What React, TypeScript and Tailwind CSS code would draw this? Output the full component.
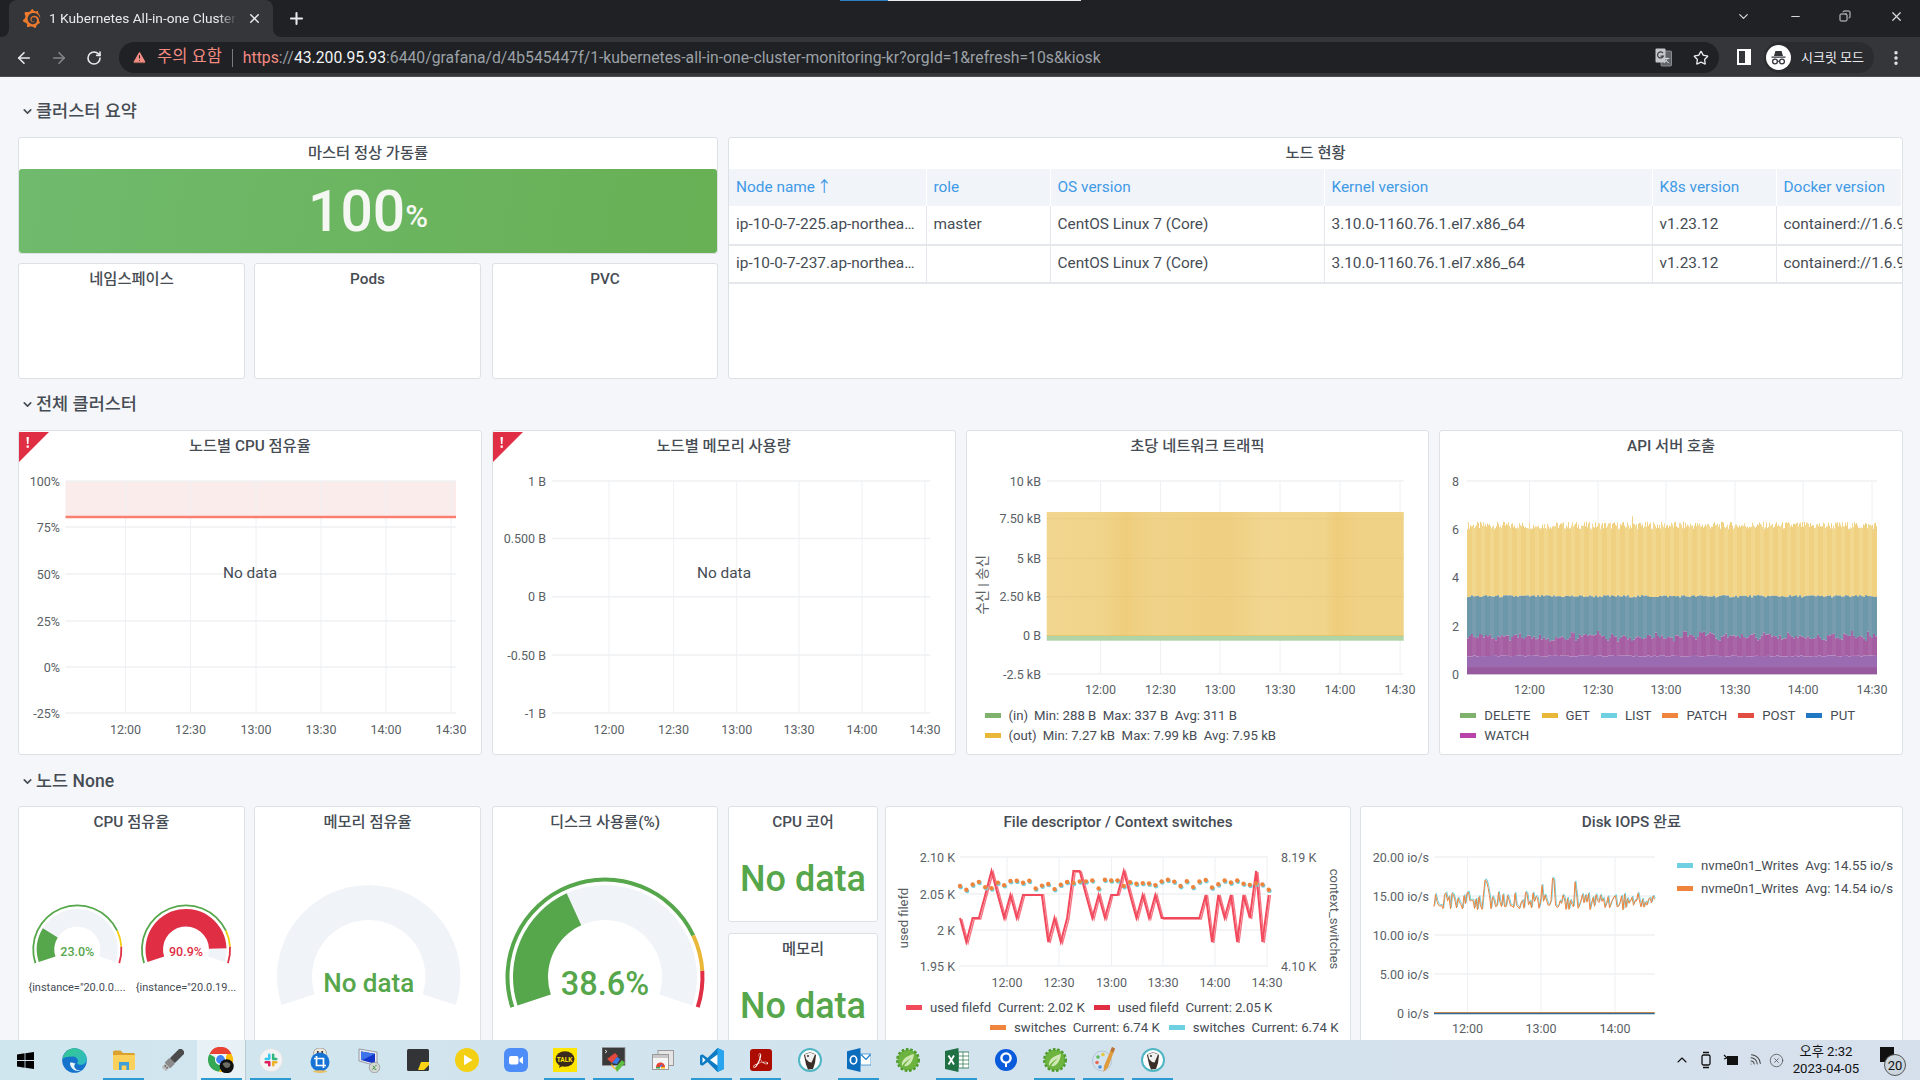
import {
  ArrowLeft, ArrowRight, RotateCw, TriangleAlert, Star, X, Plus, ChevronDown, Minus, Copy,
  MoreVertical, Wifi, ChevronUp, CircleX,
} from 'lucide-react';
import { SiGrafana, SiAdobeacrobatreader } from 'react-icons/si';
import type { ReactNode } from 'react';

const GRID = '#eef0f3';
const AXIS = '#5a5f66';
const GREEN = '#56a64b';
const YELLOW = '#eab839';
const RED = '#e02f44';

const rnd = (i: number) => {
  const x = Math.sin(i * 12.9898) * 43758.5453;
  return x - Math.floor(x);
};

// ---------- browser chrome ----------

function TabFlare({ side }: { side: 'left' | 'right' }) {
  const d = side === 'left' ? 'M8 0v8H0a8 8 0 0 0 8-8z' : 'M0 0v8h8a8 8 0 0 1-8-8z';
  return (
    <svg width="8" height="8" className={side === 'left' ? 'absolute bottom-0 -left-2' : 'absolute bottom-0 -right-2'}>
      <path d={d} fill="#35363a" />
    </svg>
  );
}

function IncognitoAvatar() {
  return (
    <svg width="25" height="25" viewBox="0 0 25 25">
      <circle cx="12.5" cy="12.5" r="12.5" fill="#fff" />
      <path d="M8 11l1.4-5h6.2l1.4 5zM5.5 11.5h14v1.2h-14z" fill="#35363a" />
      <circle cx="9" cy="16.5" r="2.4" fill="none" stroke="#35363a" strokeWidth="1.3" />
      <circle cx="16" cy="16.5" r="2.4" fill="none" stroke="#35363a" strokeWidth="1.3" />
      <path d="M11.4 16.2h2.2" stroke="#35363a" strokeWidth="1.1" />
    </svg>
  );
}

function TranslateIcon() {
  return (
    <svg width="17" height="19" viewBox="0 0 17 19" className="ml-auto mr-[21px]">
      <rect x="6" y="3" width="10.5" height="15" rx="1" fill="#5f6368" stroke="#9aa0a6" strokeWidth="0.8" />
      <rect x="0.5" y="0.5" width="10" height="14" rx="1" fill="#c4c7cb" />
      <path d="M8 5.2a3 3 0 1 0 .3 3H5.600" fill="none" stroke="#3c4043" strokeWidth="1.200" />
      <path d="M9.500 10.500h5M12 9.500v1c0 2-1.300 3.500-2.700 4.300M10.800 12c.6 1.300 1.700 2.300 3.400 3" fill="none" stroke="#dadce0" strokeWidth="0.900" />
    </svg>
  );
}

function BrowserBar() {
  return (
    <div className="relative shrink-0 h-[77px] bg-[#202124] text-[#e8eaed]">
      <div className="absolute top-0 left-[840px] h-[1px] w-[48px] bg-[#2a7fc4]" />
      <div className="absolute top-0 left-[888px] h-[1px] w-[193px] bg-[#e8eaed]" />
      <div className="flex h-[37px]">
        <div className="relative ml-[9px] flex w-[264px] items-center rounded-t-[8px] bg-[#35363a] pl-[13px]">
          <TabFlare side="left" />
          <TabFlare side="right" />
          <SiGrafana size={19} color="#ee7a2e" />
          <span className="ml-[8px] w-[188px] overflow-hidden whitespace-nowrap text-[13.7px] [mask-image:linear-gradient(to_right,black_90%,transparent)]">
            1 Kubernetes All-in-one Cluster Monitoring
          </span>
          <X size={15} strokeWidth={2.4} className="ml-[10px]" />
        </div>
        <Plus size={19} strokeWidth={2.6} className="ml-[14px] mt-[9px]" />
        <div className="ml-auto flex items-start pt-[8px] text-[#d5d7da]">
          <ChevronDown size={15} className="mr-[38px] mt-[1px]" />
          <Minus size={13} className="mr-[37px] mt-[2px]" />
          <Copy size={12} className="mr-[38px] mt-[2px] -scale-x-100" />
          <X size={15} className="mr-[16px] mt-[1px]" />
        </div>
      </div>
      <div className="flex h-[40px] items-start bg-[#35363a] pt-[5px] border-b border-b-[#4a4b4e]">
        <div className="flex h-[31px] w-[119px] items-center pl-[15px] gap-[17px]">
          <ArrowLeft size={18} strokeWidth={2.2} />
          <ArrowRight size={18} strokeWidth={2.2} className="text-[#85868a]" />
          <RotateCw size={16} strokeWidth={2.4} className="ml-[1px]" />
        </div>
        <div className="flex h-[31px] w-[1600px] items-center rounded-full bg-[#202124] pl-[13px]">
          <TriangleAlert size={15} fill="#f28b82" stroke="#202124" strokeWidth={1.6} />
          <span className="ml-[10px] text-[16.5px] text-[#f28b82] whitespace-nowrap">주의 요함</span>
          <span className="ml-[10px] mr-[10px] h-[18px] w-[1px] bg-[#7a7b7e]" />
          <span className="whitespace-nowrap pt-[1px] text-[15.75px] text-[#9aa0a6]">
            <span className="text-[#f28b82]">https</span>://<span className="text-[#f1f3f4]">43.200.95.93</span>:6440/grafana/d/4b545447f/1-kubernetes-all-in-one-cluster-monitoring-kr?orgId=1&amp;refresh=10s&amp;kiosk
          </span>
          <TranslateIcon />
          <Star size={16} strokeWidth={2} className="mr-[10px]" />
        </div>
        <div className="ml-[18px] mt-[7px] h-[16px] w-[14px] border-[2px] border-white border-r-[6px]" />
        <div className="ml-[13px] flex h-[31px] w-[110px] items-center rounded-full bg-[#2b2c30] pl-[2px]">
          <IncognitoAvatar />
          <span className="ml-[10px] text-[13px] whitespace-nowrap">시크릿 모드</span>
        </div>
        <MoreVertical size={18} strokeWidth={2.6} className="ml-[13px] mt-[7px]" />
      </div>
    </div>
  );
}

// ---------- grafana shared ----------

function Panel({ title, className = '', titleClass = 'h-[30px]', children }: { title?: string; className?: string; titleClass?: string; children?: ReactNode }) {
  return (
    <div className={`relative overflow-hidden rounded-[3px] border border-[#dce1e6] bg-white ${className}`}>
      <div className={`flex items-center justify-center whitespace-nowrap text-[15.3px] font-medium text-[#464c54] ${titleClass}`}>
        {title}
      </div>
      {children}
    </div>
  );
}

function Section({ title, className }: { title: string; className: string }) {
  return (
    <div className={`flex items-start pl-[3px] ${className}`}>
      <div className="flex h-[24px] items-center gap-[2px] text-[17.5px] font-medium text-[#464c54]">
        <ChevronDown size={13} strokeWidth={3} />
        <span>{title}</span>
      </div>
    </div>
  );
}

function ChartSvg({ x, y, w, h, children }: { x: number; y: number; w: number; h: number; children: ReactNode }) {
  return (
    <svg width={w} height={h} viewBox={`${x} ${y} ${w} ${h}`} className="block overflow-hidden">
      {children}
    </svg>
  );
}

type AxisProps = {
  x0: number; x1: number; vx: number[]; times: string[]; timeY: number;
  ys: [number, string][]; labelX: number;
};

function Axes({ x0, x1, vx, times, timeY, ys, labelX }: AxisProps) {
  const top = Math.min(...ys.map((v) => v[0]));
  const bottom = Math.max(...ys.map((v) => v[0]));
  return (
    <g fontSize="12.5" fill={AXIS}>
      {vx.map((x) => (
        <line key={x} x1={x} x2={x} y1={top} y2={bottom} stroke={GRID} strokeWidth="1" />
      ))}
      {ys.map(([y]) => (
        <line key={y} x1={x0} x2={x1} y1={y} y2={y} stroke={GRID} strokeWidth="1.5" />
      ))}
      {ys.map(([y, t]) => (
        <text key={t} x={labelX} y={y} textAnchor="end" dominantBaseline="central">{t}</text>
      ))}
      {vx.map((x, i) => (
        <text key={x} x={x} y={timeY} textAnchor="middle" dominantBaseline="central">{times[i]}</text>
      ))}
    </g>
  );
}

const TIMES = ['12:00', '12:30', '13:00', '13:30', '14:00', '14:30'];

function LegendItem({ color, children }: { color: string; children: ReactNode }) {
  return (
    <div className="flex items-center whitespace-nowrap">
      <span className="mr-[8px] h-[5px] w-[16px]" style={{ backgroundColor: color }} />
      {children}
    </div>
  );
}

function Legend({ className, children }: { className: string; children: ReactNode }) {
  return <div className={`flex h-[20px] items-center text-[13.2px] text-[#464c54] ${className}`}>{children}</div>;
}

// ---------- row 1 ----------

const NODES = [
  ['ip-10-0-7-225.ap-northeast-2.compute.internal', 'master'],
  ['ip-10-0-7-237.ap-northeast-2.compute.internal', ''],
];

function NodeTable() {
  const heads = ['Node name\u200a↑', 'role', 'OS version', 'Kernel version', 'K8s version', 'Docker version'];
  return (
    <table className="mt-[1px] w-full table-fixed border-collapse text-[15.4px] text-[#464c54]">
      <colgroup>
        <col className="w-[197px]" />
        <col className="w-[124px]" />
        <col className="w-[274px]" />
        <col className="w-[328px]" />
        <col className="w-[124px]" />
        <col />
      </colgroup>
      <thead>
        <tr className="h-[37px] bg-[#f1f4f9]">
          {heads.map((h) => (
            <th key={h} className="border-r border-r-white px-[7px] text-left font-normal text-[#3f9ae6] whitespace-nowrap">{h}</th>
          ))}
        </tr>
      </thead>
      <tbody>
        {NODES.map(([name, role]) => (
          <tr key={name} className="h-[38.5px] border-b-[2px] border-b-[#e4e8ed]">
            <td className="overflow-hidden text-ellipsis whitespace-nowrap border-r border-r-[#e4e8ed] px-[7px]">{name}</td>
            <td className="border-r border-r-[#e4e8ed] px-[7px]">{role}</td>
            <td className="border-r border-r-[#e4e8ed] px-[7px]">CentOS Linux 7 (Core)</td>
            <td className="border-r border-r-[#e4e8ed] px-[7px]">3.10.0-1160.76.1.el7.x86_64</td>
            <td className="border-r border-r-[#e4e8ed] px-[7px]">v1.23.12</td>
            <td className="overflow-hidden whitespace-nowrap px-[7px]">containerd://1.6.9</td>
          </tr>
        ))}
      </tbody>
    </table>
  );
}

function SummaryRow() {
  return (
    <div className="flex h-[242px]">
      <div className="flex w-[700px] flex-col gap-[9px]">
        <Panel title="마스터 정상 가동률" titleClass="h-[31px]" className="h-[117px]">
          <div className="flex h-[84px] items-center justify-center rounded-[3px] bg-[linear-gradient(100deg,#6fba6d,#68b054)] font-medium text-[#f4f7f2]">
            <span className="text-[57px] leading-none">100</span>
            <span className="mt-[11px] text-[31px] leading-none">%</span>
          </div>
        </Panel>
        <div className="flex h-[116px]">
          <Panel title="네임스페이스" className="w-[227px]" />
          <Panel title="Pods" className="ml-[9px] w-[227px]" />
          <Panel title="PVC" className="ml-[11px] w-[226px]" />
        </div>
      </div>
      <Panel title="노드 현황" className="ml-[10px] w-[1175px]">
        <NodeTable />
      </Panel>
    </div>
  );
}

// ---------- row 2 ----------

function AlertCorner() {
  return (
    <div className="absolute left-0 top-[1px]">
      <svg width="30" height="30" viewBox="0 0 30 30">
        <path d="M0 0h30L0 30z" fill={RED} />
        <path d="M7.5 5h2.4l-.5 7h-1.4zM7.6 13.5h2.2v2.2H7.6z" fill="#fff" />
      </svg>
    </div>
  );
}

function CpuNodesPanel() {
  return (
    <Panel title="노드별 CPU 점유율">
      <AlertCorner />
      <ChartSvg x={19} y={461} w={462} h={293}>
        <rect x={65.5} y={481} width={390.5} height={36} fill="#fbecec" />
        <Axes x0={65.5} x1={456} vx={[125.5, 190.5, 256, 321, 386, 451]} times={TIMES} timeY={729}
          ys={[[481, '100%'], [527, '75%'], [574, '50%'], [621, '25%'], [667, '0%'], [713, '-25%']]} labelX={60} />
        <line x1={65.5} x2={456} y1={517} y2={517} stroke="#f9806f" strokeWidth="2.4" />
        <text x={250} y={573} textAnchor="middle" dominantBaseline="central" fontSize="15.4" fill="#464c54">No data</text>
      </ChartSvg>
    </Panel>
  );
}

function MemNodesPanel() {
  return (
    <Panel title="노드별 메모리 사용량">
      <AlertCorner />
      <ChartSvg x={493} y={461} w={462} h={293}>
        <Axes x0={552} x1={930} vx={[609, 673.6, 736.7, 799, 862, 925]} times={TIMES} timeY={729}
          ys={[[481, '1 B'], [538.5, '0.500 B'], [596.7, '0 B'], [655, '-0.50 B'], [713, '-1 B']]} labelX={546} />
        <text x={724} y={573} textAnchor="middle" dominantBaseline="central" fontSize="15.4" fill="#464c54">No data</text>
      </ChartSvg>
    </Panel>
  );
}

function NetworkPanel() {
  return (
    <Panel title="초당 네트워크 트래픽">
      <ChartSvg x={966} y={461} w={462} h={245}>
        <defs>
          <linearGradient id="netFill" x1="0" x2="1" y1="0" y2="0">
            <stop offset="0" stopColor="#f1d68f" />
            <stop offset="0.16" stopColor="#f0d48a" />
            <stop offset="0.22" stopColor="#efcd7c" />
            <stop offset="0.3" stopColor="#f0d389" />
            <stop offset="0.5" stopColor="#efcf80" />
            <stop offset="0.6" stopColor="#f1d68f" />
            <stop offset="0.78" stopColor="#f0d48a" />
            <stop offset="0.81" stopColor="#efcd7c" />
            <stop offset="0.88" stopColor="#f0d286" />
            <stop offset="1" stopColor="#f0d286" />
          </linearGradient>
        </defs>
        <Axes x0={1045.7} x1={1402.7} vx={[1099.6, 1159.6, 1219, 1279, 1339, 1399]} times={TIMES} timeY={689}
          ys={[[481, '10 kB'], [518.7, '7.50 kB'], [558.3, '5 kB'], [596.7, '2.50 kB'], [635.7, '0 B'], [674, '-2.5 kB']]} labelX={1040} />
        <rect x={1045.7} y={512} width={357} height={123.7} fill="url(#netFill)" />
        <line x1={1045.7} x2={1402.7} y1={558.3} y2={558.3} stroke="#e5c67f" strokeWidth="1" opacity="0.6" />
        <line x1={1045.7} x2={1402.7} y1={596.7} y2={596.7} stroke="#e5c67f" strokeWidth="1" opacity="0.6" />
        <line x1={1045.7} x2={1402.7} y1={518.7} y2={518.7} stroke="#e5c67f" strokeWidth="1" opacity="0.5" />
        <rect x={1045.7} y={635.7} width={357} height={5} fill="#b1d4a6" />
        <line x1={1045.7} x2={1402.7} y1={635.5} y2={635.5} stroke={YELLOW} strokeWidth="1" opacity="0.5" />
        <text transform="translate(986 585) rotate(-90)" textAnchor="middle" fontSize="13.5" fill={AXIS}>수신 | 송신</text>
      </ChartSvg>
      <Legend className="pl-[18px]">
        <LegendItem color="#7eb26d">
          <span className="mr-[6px]">(in)</span>
          <span>Min: 288 B&nbsp; Max: 337 B&nbsp; Avg: 311 B</span>
        </LegendItem>
      </Legend>
      <Legend className="pl-[18px]">
        <LegendItem color={YELLOW}>
          <span className="mr-[6px]">(out)</span>
          <span>Min: 7.27 kB&nbsp; Max: 7.99 kB&nbsp; Avg: 7.95 kB</span>
        </LegendItem>
      </Legend>
    </Panel>
  );
}

function ApiBars() {
  const y = (v: number) => 674.3 - 24.15 * v;
  const bars = [];
  for (let i = 0; i < 410; i++) {
    const x = 1467 + i;
    const band = i % 9 < 5;
    const yellowTop = 6.0 + rnd(i) * 0.32 + (i === 165 ? 0.4 : 0);
    const tealTop = 3.18 + rnd(Math.floor(i / 2) + 300) * 0.1;
    const purple = 1.32 + (rnd(Math.floor(i / 4) + 600) + rnd(Math.floor(i / 2) + 800)) * 0.24;
    const mid = 0.72 + rnd(Math.floor(i / 3) + 900) * 0.08;
    bars.push(
      <g key={i}>
        <rect x={x} y={y(yellowTop)} width={1} height={y(tealTop) - y(yellowTop)} fill={band ? '#f0d181' : '#f2d78f'} />
        <rect x={x} y={y(tealTop)} width={1} height={y(purple) - y(tealTop)} fill={band ? '#6c98aa' : '#779dae'} />
        <rect x={x} y={y(purple)} width={1} height={y(mid) - y(purple)} fill={band ? '#a65ea3' : '#aa67a7'} />
        <rect x={x} y={y(mid)} width={1} height={y(0.3) - y(mid)} fill="#9a6bb0" />
        <rect x={x} y={y(0.3)} width={1} height={y(0) - y(0.3)} fill="#985a9f" />
      </g>,
    );
  }
  return <g>{bars}</g>;
}

function ApiPanel() {
  return (
    <Panel title="API 서버 호출">
      <ChartSvg x={1440} y={461} w={462} h={245}>
        <Axes x0={1467} x1={1877} vx={[1529.5, 1598, 1666, 1735, 1803, 1872]} times={TIMES} timeY={689}
          ys={[[481, '8'], [529, '6'], [577.3, '4'], [626, '2'], [674.3, '0']]} labelX={1459} />
        <ApiBars />
      </ChartSvg>
      <Legend className="pl-[20px] gap-[11px]">
        <LegendItem color="#7eb26d">DELETE</LegendItem>
        <LegendItem color={YELLOW}>GET</LegendItem>
        <LegendItem color="#6ed0e0">LIST</LegendItem>
        <LegendItem color="#ef843c">PATCH</LegendItem>
        <LegendItem color="#e24d42">POST</LegendItem>
        <LegendItem color="#1f78c1">PUT</LegendItem>
      </Legend>
      <Legend className="pl-[20px]">
        <LegendItem color="#ba43a9">WATCH</LegendItem>
      </Legend>
    </Panel>
  );
}

// ---------- row 3 ----------

function arcPath(cx: number, cy: number, r0: number, r1: number, from: number, to: number) {
  const ang = (p: number) => ((162 + 216 * p) * Math.PI) / 180;
  const a = ang(from);
  const b = ang(to);
  const big = (to - from) * 216 > 180 ? 1 : 0;
  const pt = (r: number, t: number) => `${cx + r * Math.cos(t)} ${cy + r * Math.sin(t)}`;
  return `M${pt(r1, a)}A${r1} ${r1} 0 ${big} 1 ${pt(r1, b)}L${pt(r0, b)}A${r0} ${r0} 0 ${big} 0 ${pt(r0, a)}Z`;
}

type GaugeProps = {
  cx: number; cy: number; ring?: [number, number]; band: [number, number];
  value: number; color?: string; label: string; fontSize: number; textY: number; ringColor?: string;
};

function Gauge({ cx, cy, ring, band, value, color = GREEN, label, fontSize, textY, ringColor = YELLOW }: GaugeProps) {
  return (
    <g>
      <path d={arcPath(cx, cy, band[0], band[1], 0, 1)} fill="#f0f3f8" />
      {value > 0 && <path d={arcPath(cx, cy, band[0], band[1], 0, value)} fill={color} />}
      {ring && (
        <>
          <path d={arcPath(cx, cy, ring[0], ring[1], 0, 0.8)} fill={GREEN} />
          <path d={arcPath(cx, cy, ring[0], ring[1], 0.8, 0.9)} fill={ringColor} />
          <path d={arcPath(cx, cy, ring[0], ring[1], 0.9, 1)} fill={RED} />
        </>
      )}
      <text x={cx} y={textY} textAnchor="middle" dominantBaseline="central" fontSize={fontSize} fontWeight="500" fill={color}>
        {label}
      </text>
    </g>
  );
}

function CpuGauges() {
  return (
    <Panel title="CPU 점유율" className="h-[270px] w-[227px]">
      <ChartSvg x={19} y={837} w={225} h={200}>
        <Gauge cx={77.3} cy={949.5} ring={[43.2, 45]} band={[23, 40.5]} value={0.23} label="23.0%" fontSize={12.5} textY={951.5} ringColor="#f2cc0c" />
        <Gauge cx={186} cy={949.5} ring={[43.2, 45]} band={[23, 40.5]} value={0.909} color={RED} label="90.9%" fontSize={12.5} textY={951.5} ringColor="#f2cc0c" />
        <text x={77} y={987} textAnchor="middle" dominantBaseline="central" fontSize="11" fill="#464c54">{'{instance="20.0.0....'}</text>
        <text x={186} y={987} textAnchor="middle" dominantBaseline="central" fontSize="11" fill="#464c54">{'{instance="20.0.19...'}</text>
      </ChartSvg>
    </Panel>
  );
}

function MemGauge() {
  return (
    <Panel title="메모리 점유율" className="ml-[9px] h-[270px] w-[227px]">
      <ChartSvg x={255} y={837} w={225} h={200}>
        <Gauge cx={368.7} cy={976.7} band={[56.7, 91.7]} value={0} label="No data" fontSize={26} textY={983} />
      </ChartSvg>
    </Panel>
  );
}

function DiskGauge() {
  return (
    <Panel title="디스크 사용률(%)" className="ml-[11px] h-[270px] w-[226px]">
      <ChartSvg x={493} y={837} w={224} h={200}>
        <Gauge cx={605} cy={977} ring={[95.5, 99.5]} band={[57, 92]} value={0.386} label="38.6%" fontSize={32.5} textY={984} />
      </ChartSvg>
    </Panel>
  );
}

function SingleStats() {
  return (
    <div className="ml-[10px] flex w-[150px] flex-col gap-[11px]">
      <Panel title="CPU 코어" className="h-[116px] shrink-0">
        <div className="mt-[15px] text-center text-[36px] font-medium leading-[54px] text-[#56a64b]">No data</div>
      </Panel>
      <Panel title="메모리" className="h-[116px] shrink-0">
        <div className="mt-[15px] text-center text-[36px] font-medium leading-[54px] text-[#56a64b]">No data</div>
      </Panel>
    </div>
  );
}

const FD_LEVELS = '34332123232222434311232322123232333333324232423142';
const fdY: Record<string, number> = { '1': 871, '2': 895, '3': 918, '4': 942 };

function FdPanel() {
  const pts = Array.from(FD_LEVELS).map((c, i) => [960 + i * 6.3, fdY[c]] as const);
  const a = pts.map(([x, y]) => `${x},${y}`).join(' ');
  const b = pts.map(([x, y]) => `${x + 1.8},${y + (y === 895 ? 0 : 1)}`).join(' ');
  const dots = pts.map(([x], i) => [x, 885 + (rnd(i + 40) - 0.5) * 11] as const);
  return (
    <Panel title="File descriptor / Context switches" className="ml-[7px] h-[270px] w-[466px]">
      <ChartSvg x={886} y={837} w={464} h={161}>
        <Axes x0={960} x1={1268} vx={[1007, 1059, 1111.5, 1163, 1215, 1267]} times={TIMES} timeY={982}
          ys={[[857, '2.10 K'], [894, '2.05 K'], [930, '2 K'], [966, '1.95 K']]} labelX={955} />
        <text x={1281} y={857} dominantBaseline="central" fontSize="12.5" fill={AXIS}>8.19 K</text>
        <text x={1281} y={966} dominantBaseline="central" fontSize="12.5" fill={AXIS}>4.10 K</text>
        <polyline points={a} fill="none" stroke="#f2495c" strokeWidth="2" />
        <polyline points={b} fill="none" stroke="#f2495c" strokeWidth="1.4" opacity="0.75" />
        {dots.map(([x, y], i) => <circle key={i} cx={x + 0.8} cy={y + 1.2} r="2.2" fill="#6ed0e0" />)}
        {dots.map(([x, y], i) => <circle key={i} cx={x} cy={y} r="2.2" fill="#ef843c" />)}
        <text transform="translate(908 918) rotate(-90)" textAnchor="middle" fontSize="13" fill={AXIS}>used filefd</text>
        <text transform="translate(1330 919) rotate(90)" textAnchor="middle" fontSize="13" fill={AXIS}>context_switches</text>
      </ChartSvg>
      <Legend className="pl-[20px] gap-[9px]">
        <LegendItem color="#f2495c"><span>used filefd&nbsp; Current: 2.02 K</span></LegendItem>
        <LegendItem color={RED}><span>used filefd&nbsp; Current: 2.05 K</span></LegendItem>
      </Legend>
      <Legend className="pl-[104px] gap-[9px]">
        <LegendItem color="#ef843c"><span>switches&nbsp; Current: 6.74 K</span></LegendItem>
        <LegendItem color="#6ed0e0"><span>switches&nbsp; Current: 6.74 K</span></LegendItem>
      </Legend>
    </Panel>
  );
}

const IOPS_SPIKES: Record<number, number> = { 34: 12, 35: 24, 36: 10, 66: 16, 79: 26, 80: 12, 94: 10, 72: 8, 118: 6 };

function IopsPanel() {
  const pts = Array.from({ length: 148 }, (_, i) => {
    const x = 1434 + i * 1.5;
    return [x, 901 + (rnd(i + 90) - 0.5) * 18 - (IOPS_SPIKES[i] ?? 0)] as const;
  });
  const orange = pts.map(([x, y]) => `${x},${y}`).join(' ');
  const cyan = pts.map(([x, y]) => `${x + 0.8},${y - 1.2}`).join(' ');
  return (
    <Panel title="Disk IOPS 완료" className="ml-[9px] h-[270px] w-[543px]">
      <div className="flex">
        <ChartSvg x={1361} y={837} w={310} h={202}>
          <Axes x0={1434} x1={1654.7} vx={[1467.6, 1541, 1615]} times={['12:00', '13:00', '14:00']} timeY={1028}
            ys={[[857, '20.00 io/s'], [896, '15.00 io/s'], [935, '10.00 io/s'], [974, '5.00 io/s'], [1013, '0 io/s']]} labelX={1429} />
          <polyline points={cyan} fill="none" stroke="#6ed0e0" strokeWidth="1" />
          <polyline points={orange} fill="none" stroke="#ef843c" strokeWidth="1" />
          <line x1={1434} x2={1654.7} y1={1012.5} y2={1012.5} stroke="#c58a4a" strokeWidth="1" />
          <line x1={1434} x2={1654.7} y1={1013.7} y2={1013.7} stroke="#2a6a9c" strokeWidth="1.2" />
        </ChartSvg>
        <div className="ml-[6px] flex flex-col gap-[3px] pt-[19px]">
          <Legend className="">
            <LegendItem color="#6ed0e0"><span>nvme0n1_Writes&nbsp; Avg: 14.55 io/s</span></LegendItem>
          </Legend>
          <Legend className="">
            <LegendItem color="#ef843c"><span>nvme0n1_Writes&nbsp; Avg: 14.54 io/s</span></LegendItem>
          </Legend>
        </div>
      </div>
    </Panel>
  );
}

// ---------- taskbar ----------

const WinIcon = (
  <svg width="17" height="17" viewBox="0 0 17 17" fill="#000">
    <path d="M0 2.4L7.6 1.3v6.8H0zM8.4 1.2L17 0v8.1H8.4zM0 8.9h7.6v6.8L0 14.6zM8.4 8.9H17V17l-8.6-1.2z" />
  </svg>
);

const EdgeIcon = (
  <svg width="25" height="25" viewBox="0 0 25 25">
    <defs>
      <linearGradient id="edgeA" x1="0" y1="0" x2="1" y2="1">
        <stop offset="0" stopColor="#36c98a" />
        <stop offset="1" stopColor="#2fb8c9" />
      </linearGradient>
    </defs>
    <circle cx="12.5" cy="12.5" r="12.3" fill="#1673cc" />
    <path d="M.5 11C1.8 4.6 6.6.2 12.5.2c6.8 0 12.3 5 12.3 11 0 3.5-3 5.6-6 5.6-2.2 0-3.6-.8-3.6-1.6 0-.6.8-.9.8-2.4 0-2.5-2.5-4.4-5.5-4.4C6.500 8.400 2.500 9 .5 11z" fill="url(#edgeA)" />
    <path d="M8 15c0 4.500 4 8 8.500 8 1 0 2-.2 2.800-.5-4 .4-6.300-1.500-6.900-3.500-.5-1.500.3-2.800 1.100-3.500-1.900-.2-4.500-1.600-5.500-.5z" fill="#e8f4fb" />
  </svg>
);

const FolderIcon = (
  <svg width="22" height="20" viewBox="0 0 22 20">
    <path d="M0 2a1.500 1.500 0 0 1 1.500-1.500h6L10 3h10.500A1.500 1.500 0 0 1 22 4.500V6H0z" fill="#dca12c" />
    <path d="M0 5h22v13.500a1.500 1.500 0 0 1-1.500 1.500h-19A1.500 1.500 0 0 1 0 18.500z" fill="#fbd15b" />
    <path d="M6 12h10v8h-2.600v-4.500H8.600V20H6z" fill="#3f9fd8" />
  </svg>
);

const UsbIcon = (
  <svg width="22" height="22" viewBox="0 0 22 22">
    <g transform="rotate(45 11 11)">
      <rect x="7.500" y="-3" width="7" height="15" rx="1" fill="#4b4b4b" />
      <rect x="7" y="12" width="8" height="7" rx="1" fill="#8a8a8a" />
      <rect x="8" y="19" width="6" height="5" fill="#bdbdbd" />
      <rect x="9" y="20" width="1.500" height="1.500" fill="#555" />
      <rect x="11.500" y="20" width="1.500" height="1.500" fill="#555" />
    </g>
  </svg>
);

const ChromeIcon = (
  <svg width="26" height="26" viewBox="0 0 26 26">
    <path d="M1.500 7A12 12 0 0 1 23.500 7H13z" fill="#e94235" />
    <path d="M1.500 7A12 12 0 0 0 11 24.800L16 16z" fill="#34a853" />
    <path d="M23.500 7A12 12 0 0 1 11 24.800L16 16l3-9z" fill="#fbbc04" />
    <circle cx="12.500" cy="12.500" r="5.500" fill="#fff" />
    <circle cx="12.500" cy="12.500" r="4.400" fill="#4285f4" />
    <circle cx="18.700" cy="19.200" r="7" fill="#111" />
    <path d="M14.500 17c1.500-2.500 6-2.500 8 0l-1 3-2 1-2.500-.5z" fill="#6d6d66" />
  </svg>
);

const SlackIcon = (
  <svg width="24" height="24" viewBox="0 0 24 24">
    <circle cx="12" cy="12" r="11.500" fill="#f3f3f3" stroke="#dcdcdc" strokeWidth="0.6" />
    <rect x="9" y="5.500" width="2.500" height="6" rx="1.250" fill="#36c5f0" />
    <rect x="5.500" y="9.800" width="5.500" height="2.500" rx="1.250" fill="#36c5f0" />
    <rect x="12.900" y="5.500" width="2.500" height="6" rx="1.250" fill="#2eb67d" />
    <rect x="13" y="9.800" width="5.500" height="2.500" rx="1.250" fill="#2eb67d" />
    <rect x="5.500" y="13" width="5.500" height="2.500" rx="1.250" fill="#e01e5a" />
    <rect x="9" y="13" width="2.500" height="5.500" rx="1.250" fill="#e01e5a" />
    <rect x="13" y="13" width="5.500" height="2.500" rx="1.250" fill="#ecb22e" />
    <rect x="13" y="13" width="2.500" height="5.500" rx="1.250" fill="#ecb22e" />
  </svg>
);

const CropIcon = (
  <svg width="22" height="25" viewBox="0 0 22 25">
    <ellipse cx="11" cy="5" rx="6.500" ry="5" fill="#f0e9d8" stroke="#666" strokeWidth="0.5" />
    <circle cx="8.800" cy="4" r="1" fill="#222" />
    <circle cx="13.200" cy="4" r="1" fill="#222" />
    <circle cx="11" cy="14" r="9.500" fill="#1673d6" />
    <path d="M7.500 8v9.500H17M5 10.500h9.500V20" fill="none" stroke="#fff" strokeWidth="1.700" />
    <ellipse cx="11" cy="23.600" rx="7" ry="1.400" fill="#e8c065" />
  </svg>
);

const RemoteIcon = (
  <svg width="24" height="25" viewBox="0 0 24 25">
    <path d="M2 1l18 3v14L2 13z" fill="#e8e8ee" stroke="#7c7c85" strokeWidth="0.7" />
    <path d="M4 3.500l14 2.300v10L4 12z" fill="#1234c8" />
    <path d="M4 3.500l14 2.300-12 6L4 12z" fill="#3d73ea" />
    <circle cx="17.500" cy="19.500" r="5.300" fill="#d4d6d4" stroke="#7f7f7f" strokeWidth="0.6" />
    <path d="M15.500 21.500l1.700-2M18 18.500l1.500-1.500M15.800 18l2 1.700M17.300 20.800l2 .7" stroke="#2f8e2f" strokeWidth="1" />
  </svg>
);

const StickyIcon = (
  <svg width="22" height="22" viewBox="0 0 22 22">
    <rect width="22" height="22" rx="1.500" fill="#333436" />
    <path d="M11 21l3-8h8v3l-5 5z" fill="#fbd316" />
    <path d="M11 22v-1h6v1z" fill="#333436" />
  </svg>
);

const PlayIcon = (
  <svg width="24" height="24" viewBox="0 0 24 24">
    <circle cx="12" cy="12" r="12" fill="#f3d014" />
    <path d="M9 6.800l8.500 5.200L9 17.200z" fill="#fff" />
  </svg>
);

const ZoomIcon = (
  <svg width="24" height="24" viewBox="0 0 24 24">
    <rect width="24" height="24" rx="6" fill="#4d8df8" />
    <rect x="5" y="8" width="9.500" height="8.500" rx="2" fill="#fff" />
    <path d="M15.500 11l3.500-2.500v7.500L15.500 13.500z" fill="#fff" />
  </svg>
);

const KakaoIcon = (
  <div className="relative flex h-[24px] w-[24px] items-center justify-center bg-[#ffe600]">
    <svg width="20" height="18" viewBox="0 0 20 18" className="absolute">
      <ellipse cx="10" cy="8" rx="9.500" ry="7.800" fill="#3a2a1d" />
      <path d="M5 13l-1 4 5-3z" fill="#3a2a1d" />
    </svg>
    <span className="relative text-[6.500px] font-bold leading-none text-[#ffe600]">TALK</span>
  </div>
);

const GcpIcon = (
  <svg width="24" height="26" viewBox="0 0 24 26">
    <rect x="0" y="0.500" width="23" height="18" fill="#3a3a3a" stroke="#9a9a9a" strokeWidth="0.8" />
    <path d="M3 3l2 1.500L3 6" fill="none" stroke="#fff" strokeWidth="0.8" />
    <path d="M5 12l8-6 3 3-6 7z" fill="#e5483c" />
    <path d="M10 16l5-6 3 2-3 5z" fill="#3c7be6" />
    <path d="M13 21l7-8 3 3-8 9z" fill="#5fc03f" />
    <path d="M9 16l4 5 2 3-5-4z" fill="#f5b82e" />
  </svg>
);

const ChromeAppIcon = (
  <svg width="22" height="20" viewBox="0 0 22 20">
    <rect x="6" y="0.500" width="15.500" height="15" fill="#e5e5e5" stroke="#9b9b9b" />
    <rect x="0.500" y="4.500" width="16" height="15" fill="#f5f5f5" stroke="#9b9b9b" />
    <rect x="1" y="5" width="15" height="3" fill="#c8c8c8" />
    <path d="M4 17a4.500 4.500 0 0 1 9 0z" fill="#e94235" />
    <path d="M8.500 17a1.800 1.800 0 0 1 1.800-1.800" stroke="#4285f4" strokeWidth="1.400" fill="none" />
    <path d="M4 17h4v1.500H4z" fill="#34a853" />
    <path d="M9 17h4v1.500H9z" fill="#fbbc04" />
  </svg>
);

const VsCodeIcon = (
  <svg width="24" height="24" viewBox="0 0 24 24">
    <path d="M17.500 0L24 3v18l-6.500 3L7.500 14l-5 3.800L0 16.500V7.500L2.500 6.200l5 3.800z" fill="#0d7cc4" />
    <path d="M17.500 0L24 3v18l-6.500 3z" fill="#28a5ee" />
    <path d="M17.500 6.500v11L10 12z" fill="#fff" />
    <path d="M2.500 9l3 3-3 3z" fill="#fff" />
  </svg>
);

const PdfIcon = (
  <div className="flex h-[22px] w-[22px] items-center justify-center rounded-[3px] bg-[#ad0c00]">
    <SiAdobeacrobatreader size={15} color="#fff" />
  </div>
);

const BeaverIcon = (
  <svg width="24" height="24" viewBox="0 0 24 24">
    <circle cx="12" cy="12" r="11" fill="#fff" stroke="#4fb6c2" strokeWidth="2" />
    <path d="M6 7c3-3.500 9-3.500 12 0l-1 8-2 6-5 .5-2-5z" fill="#3a2e28" />
    <path d="M7 6.500c3-2 7-2 10 0l-1.500 3.500-2 4.500-2.500-.5-3-3z" fill="#f0f0ee" />
    <circle cx="10" cy="8" r="0.900" fill="#222" />
  </svg>
);

const OutlookIcon = (
  <svg width="24" height="24" viewBox="0 0 24 24">
    <path d="M0 3.200L13.500 0v24L0 20.800z" fill="#0b6cbc" />
    <path d="M13.500 6H24v11H13.500z" fill="#fff" stroke="#1a7dc9" strokeWidth="0.7" />
    <path d="M14 6.500l5 5 4.500-5" fill="none" stroke="#1a7dc9" strokeWidth="1.200" />
    <ellipse cx="6.500" cy="12" rx="3.200" ry="4" fill="none" stroke="#fff" strokeWidth="1.700" />
  </svg>
);

const SpringIcon = (
  <svg width="24" height="24" viewBox="0 0 24 24">
    <circle cx="12" cy="12" r="10.500" fill="#6db33f" />
    <circle cx="12" cy="12" r="10.800" fill="none" stroke="#4e9a2c" strokeWidth="2.400" strokeDasharray="2.600 1.800" />
    <path d="M6 18c-1-6 4-10 12-12-1 8-5 13-10 12 2-3 4-5 7-8-4 2-7 5-9 8z" fill="#cfe8b5" />
  </svg>
);

const ExcelIcon = (
  <svg width="24" height="24" viewBox="0 0 24 24">
    <path d="M0 3L13.500 0v24L0 21z" fill="#1f7144" />
    <path d="M13.500 4H24v16H13.500z" fill="#fff" stroke="#1f7144" strokeWidth="0.8" />
    <path d="M13.500 8h10.500M13.500 12h10.500M13.500 16h10.500M18 4v16" stroke="#1f7144" strokeWidth="0.7" />
    <path d="M3.500 7.500l5.500 9M9 7.500l-5.500 9" stroke="#fff" strokeWidth="1.800" />
  </svg>
);

const PinIcon = (
  <svg width="22" height="22" viewBox="0 0 22 22">
    <circle cx="11" cy="11" r="11" fill="#0a5bdc" />
    <circle cx="11" cy="9" r="4.600" fill="none" stroke="#fff" strokeWidth="2.400" />
    <path d="M10 13h2v5h-2z" fill="#fff" />
  </svg>
);

const PaletteIcon = (
  <svg width="24" height="26" viewBox="0 0 24 26">
    <ellipse cx="10" cy="14" rx="9.500" ry="10" fill="#d5e3ee" stroke="#9cb2c4" strokeWidth="0.6" />
    <circle cx="6" cy="10" r="1.800" fill="#5fb95b" />
    <circle cx="11" cy="7.500" r="1.800" fill="#e5c73b" />
    <circle cx="5" cy="15.500" r="1.800" fill="#e96a55" />
    <circle cx="8" cy="20" r="1.800" fill="#4b8fd6" />
    <path d="M20 0l3 1.500-7 19-4.500 4.500.5-6z" fill="#e09b3d" />
    <path d="M20 0l3 1.500-1.500 4-3-1.500z" fill="#b7733b" />
  </svg>
);

const DOCK: { icon: ReactNode; active?: boolean; focus?: boolean }[] = [
  { icon: WinIcon },
  { icon: EdgeIcon },
  { icon: FolderIcon, active: true },
  { icon: UsbIcon },
  { icon: ChromeIcon, active: true, focus: true },
  { icon: SlackIcon, active: true },
  { icon: CropIcon },
  { icon: RemoteIcon },
  { icon: StickyIcon },
  { icon: PlayIcon },
  { icon: ZoomIcon },
  { icon: KakaoIcon, active: true },
  { icon: GcpIcon, active: true },
  { icon: ChromeAppIcon },
  { icon: VsCodeIcon, active: true },
  { icon: PdfIcon, active: true },
  { icon: BeaverIcon },
  { icon: OutlookIcon, active: true },
  { icon: SpringIcon },
  { icon: ExcelIcon, active: true },
  { icon: PinIcon },
  { icon: SpringIcon, active: true },
  { icon: PaletteIcon, active: true },
  { icon: BeaverIcon, active: true },
];

function Taskbar() {
  return (
    <div className="flex h-[40px] shrink-0 items-stretch bg-[linear-gradient(90deg,#d0e6ef,#d2e3ee_50%,#d6e0ec)] pl-[1px]">
      {DOCK.map((d, i) => (
        <div key={i} className={`relative flex w-[49px] items-center justify-center ${d.focus ? 'bg-[#e8f2f6] border-r border-r-[#b9ccd6]' : ''}`}>
          {d.icon}
          {d.active && <span className="absolute bottom-0 left-[4px] h-[2px] w-[41px] bg-[#2d9bd2]" />}
        </div>
      ))}
      <div className="ml-auto flex items-center text-[#111]">
        <ChevronUp size={16} strokeWidth={1.6} />
        <svg width="14" height="20" viewBox="0 0 14 20" className="ml-[9px]">
          <rect x="3" y="5" width="8" height="10" rx="1.500" fill="none" stroke="#111" strokeWidth="1.300" />
          <path d="M4 2.500h6M4 17.500h6" stroke="#111" strokeWidth="1.300" />
        </svg>
        <svg width="16" height="16" viewBox="0 0 16 16" className="ml-[10px]">
          <rect x="4" y="4" width="11" height="9" fill="#111" />
          <path d="M1 3l3 3M1 7l3-1" stroke="#111" strokeWidth="1.200" />
        </svg>
        <Wifi size={15} strokeWidth={1.6} className="ml-[8px] rotate-45 text-[#444]" />
        <CircleX size={15} strokeWidth={1.3} className="ml-[7px] text-[#555]" />
        <div className="ml-[5px] flex w-[74px] flex-col items-center text-[13.2px] leading-[17px] text-[#111]">
          <span>오후 2:32</span>
          <span>2023-04-05</span>
        </div>
        <div className="relative ml-[17px] mr-[25px] h-[28px] w-[15px]">
          <div className="absolute left-0 top-[1px] h-[15px] w-[14px] bg-[#111]" />
          <div className="absolute left-[4px] top-[8px] flex h-[22px] w-[22px] items-center justify-center rounded-full border border-[#555] bg-[#ccd6de] text-[13px] leading-none">20</div>
        </div>
      </div>
    </div>
  );
}

export default function App() {
  return (
    <div className="flex h-screen w-full flex-col overflow-hidden bg-[#f5f6f9] font-['Roboto','Noto_Sans_CJK_KR',sans-serif]">
      <BrowserBar />
      <main className="min-h-0 flex-1 overflow-hidden pl-[18px] pr-[17px]">
        <Section title="클러스터 요약" className="h-[60px] pt-[22px]" />
        <SummaryRow />
        <Section title="전체 클러스터" className="h-[51px] pt-[13px]" />
        <div className="grid h-[325px] grid-cols-4 gap-[10px]">
          <CpuNodesPanel />
          <MemNodesPanel />
          <NetworkPanel />
          <ApiPanel />
        </div>
        <Section title="노드 None" className="h-[51px] pt-[14px]" />
        <div className="flex h-[270px]">
          <CpuGauges />
          <MemGauge />
          <DiskGauge />
          <SingleStats />
          <FdPanel />
          <IopsPanel />
        </div>
      </main>
      <Taskbar />
    </div>
  );
}
